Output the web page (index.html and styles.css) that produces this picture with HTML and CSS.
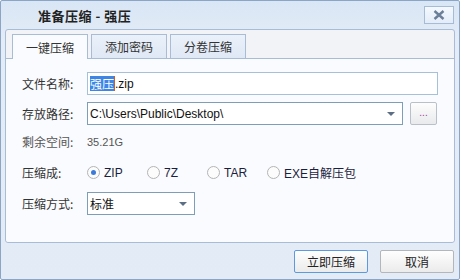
FILE: index.html
```html
<!DOCTYPE html>
<html><head>
  <meta charset="UTF-8">
  <title>准备压缩 - 强压</title>
  <link rel="stylesheet" href="styles.css">
</head><body>

<div class="dlg">
  <div class="titlebar">
    <span class="title">准备压缩 - 强压</span>
    <span class="close"><svg width="12" height="10" viewBox="0 0 12 10"><path d="M1.5 1 L10.5 9 M10.5 1 L1.5 9" stroke="#6c7f98" stroke-width="2.4"/></svg></span>
  </div>

  <div class="panel">
    <div class="tabs">
      <span class="tab on">一键压缩</span>
      <span class="tab">添加密码</span>
      <span class="tab">分卷压缩</span>
    </div>
    <div class="page">
      <div class="row">
        <span class="lbl">文件名称:</span>
        <span class="field name"><span class="sel">强压</span><span class="caret"></span>.zip</span>
      </div>
      <div class="row r2">
        <span class="lbl">存放路径:</span>
        <span class="field combo">C:\Users\Public\Desktop\<i class="arrow"></i></span>
        <span class="browse">...</span>
      </div>
      <div class="row r3">
        <span class="lbl grey">剩余空间:</span>
        <span class="free">35.21G</span>
      </div>
      <div class="row r4">
        <span class="lbl">压缩成:</span>
        <span class="opt"><i class="radio checked"></i>ZIP</span>
        <span class="opt"><i class="radio"></i>7Z</span>
        <span class="opt"><i class="radio"></i>TAR</span>
        <span class="opt"><i class="radio"></i>EXE自解压包</span>
      </div>
      <div class="row r5">
        <span class="lbl">压缩方式:</span>
        <span class="field combo mode">标准<i class="arrow"></i></span>
      </div>
    </div>
  </div>

  <div class="footer">
    <span class="btn focus">立即压缩</span>
    <span class="btn">取消</span>
  </div>
</div>

</body></html>
```

FILE: styles.css
```css
body { margin: 0; background: #fff; }
.dlg { width: 460px; height: 280px; box-sizing: border-box;
  border: 1px solid #8da5c4; border-radius: 2px;
  background: linear-gradient(#d9e6f5, #e4ecf7 40px, #e3ebf6);
  display: flex; flex-direction: column;
  font-family: "Noto Sans CJK SC", "Liberation Sans", sans-serif;
  font-size: 12px; color: #333; }

.titlebar { height: 28px; display: flex; align-items: center;
  padding-left: 37px; padding-right: 5px; }
.title { font-size: 13px; font-weight: bold; color: #222; letter-spacing: 0.5px; }
.close { margin-left: auto; width: 28px; height: 16px; margin-top: -1px;
  border: 1px solid #a6bbd6; background: linear-gradient(#f5f9fe, #e3ecf8);
  display: flex; align-items: center; justify-content: center; }

.panel { height: 214px; margin: 0 4px; box-sizing: border-box;
  border: 1px solid #a8bcd6; border-radius: 3px; background: #f1f3f7;
  display: flex; flex-direction: column; }
.tabs { display: flex; padding: 4px 0 0 6px; height: 24px; }
.tab { width: 74px; height: 23px; margin-right: 3px;
  border: 1px solid #a8bcd6; border-bottom: none;
  background: linear-gradient(#ebf1fa, #dfe8f5);
  display: flex; align-items: center; justify-content: center; color: #333; }
.tab.on { background: #fafbfe; height: 24px; position: relative; z-index: 1; }
.page { flex: 1; border-top: 1px solid #a8bcd6; background: #fafbfe;
  border-radius: 0 0 3px 3px; padding: 13px 16px 0 16px; }

.row { display: flex; align-items: center; height: 23px; }
.r2 { margin-top: 7px; }
.r3 { margin-top: 7px; height: 19px; }
.r4 { margin-top: 12px; height: 19px; }
.r5 { margin-top: 10px; }
.lbl { width: 65px; }
.grey { color: #555; }
.free { font-family: "Liberation Sans", sans-serif; font-size: 11px; color: #555; }

.field { height: 23px; box-sizing: border-box; display: flex; align-items: center;
  padding-left: 2px; background: #fff; color: #111;
  font-family: "Liberation Sans", "Noto Sans CJK SC", sans-serif; font-size: 12px; }
.name { width: 351px; border: 1px solid #a5c0d8; }
.sel { background: #3d86e6; color: #fff;
  font-family: "Noto Sans CJK SC", sans-serif; line-height: 15px; }
.caret { width: 1px; height: 15px; background: #c8602a; }
.combo { width: 316px; border: 1px solid #7f9cb8; position: relative; }
.mode { width: 108px; font-family: "Noto Sans CJK SC", sans-serif; }
.arrow { position: absolute; right: 7px; top: 9px; width: 0; height: 0;
  border-left: 4px solid transparent; border-right: 4px solid transparent;
  border-top: 4px solid #5c6e85; }
.browse { width: 27px; height: 23px; margin-left: 7px; box-sizing: border-box;
  border: 1px solid #b9c0c9; border-radius: 2px;
  background: linear-gradient(#fdfdfd, #e9eaec);
  display: flex; align-items: center; justify-content: center;
  color: #a0409a; font-family: "Liberation Sans", sans-serif; font-size: 10px;
  padding-bottom: 2px; }

.opt { width: 60px; display: flex; align-items: center; color: #1b1e3c;
  font-family: "Liberation Sans", "Noto Sans CJK SC", sans-serif; font-size: 12px; }
.opt:first-of-type { margin-left: 1px; }
.opt:last-child { width: auto; }
.opt:last-child { font-family: "Liberation Sans", "Noto Sans CJK SC", sans-serif; font-size: 12px; }
.radio { width: 11px; height: 11px; border: 1px solid #b4b4b4; border-radius: 50%;
  background: #fcfcfc; margin-right: 4px; box-sizing: content-box;
  display: flex; align-items: center; justify-content: center; }
.radio.checked::after { content: ""; width: 5px; height: 5px; border-radius: 50%;
  background: #3c7bd9; }

.footer { display: flex; justify-content: flex-end; gap: 12px;
  padding: 7px 5px 0 0; }
.btn { width: 74px; height: 23px; box-sizing: border-box;
  border: 1px solid #b3b6ba; border-radius: 2px;
  background: linear-gradient(#fefefe, #ebebeb);
  display: flex; align-items: center; justify-content: center; color: #222; }
.btn.focus { border-color: #5b9ae0; }
```
